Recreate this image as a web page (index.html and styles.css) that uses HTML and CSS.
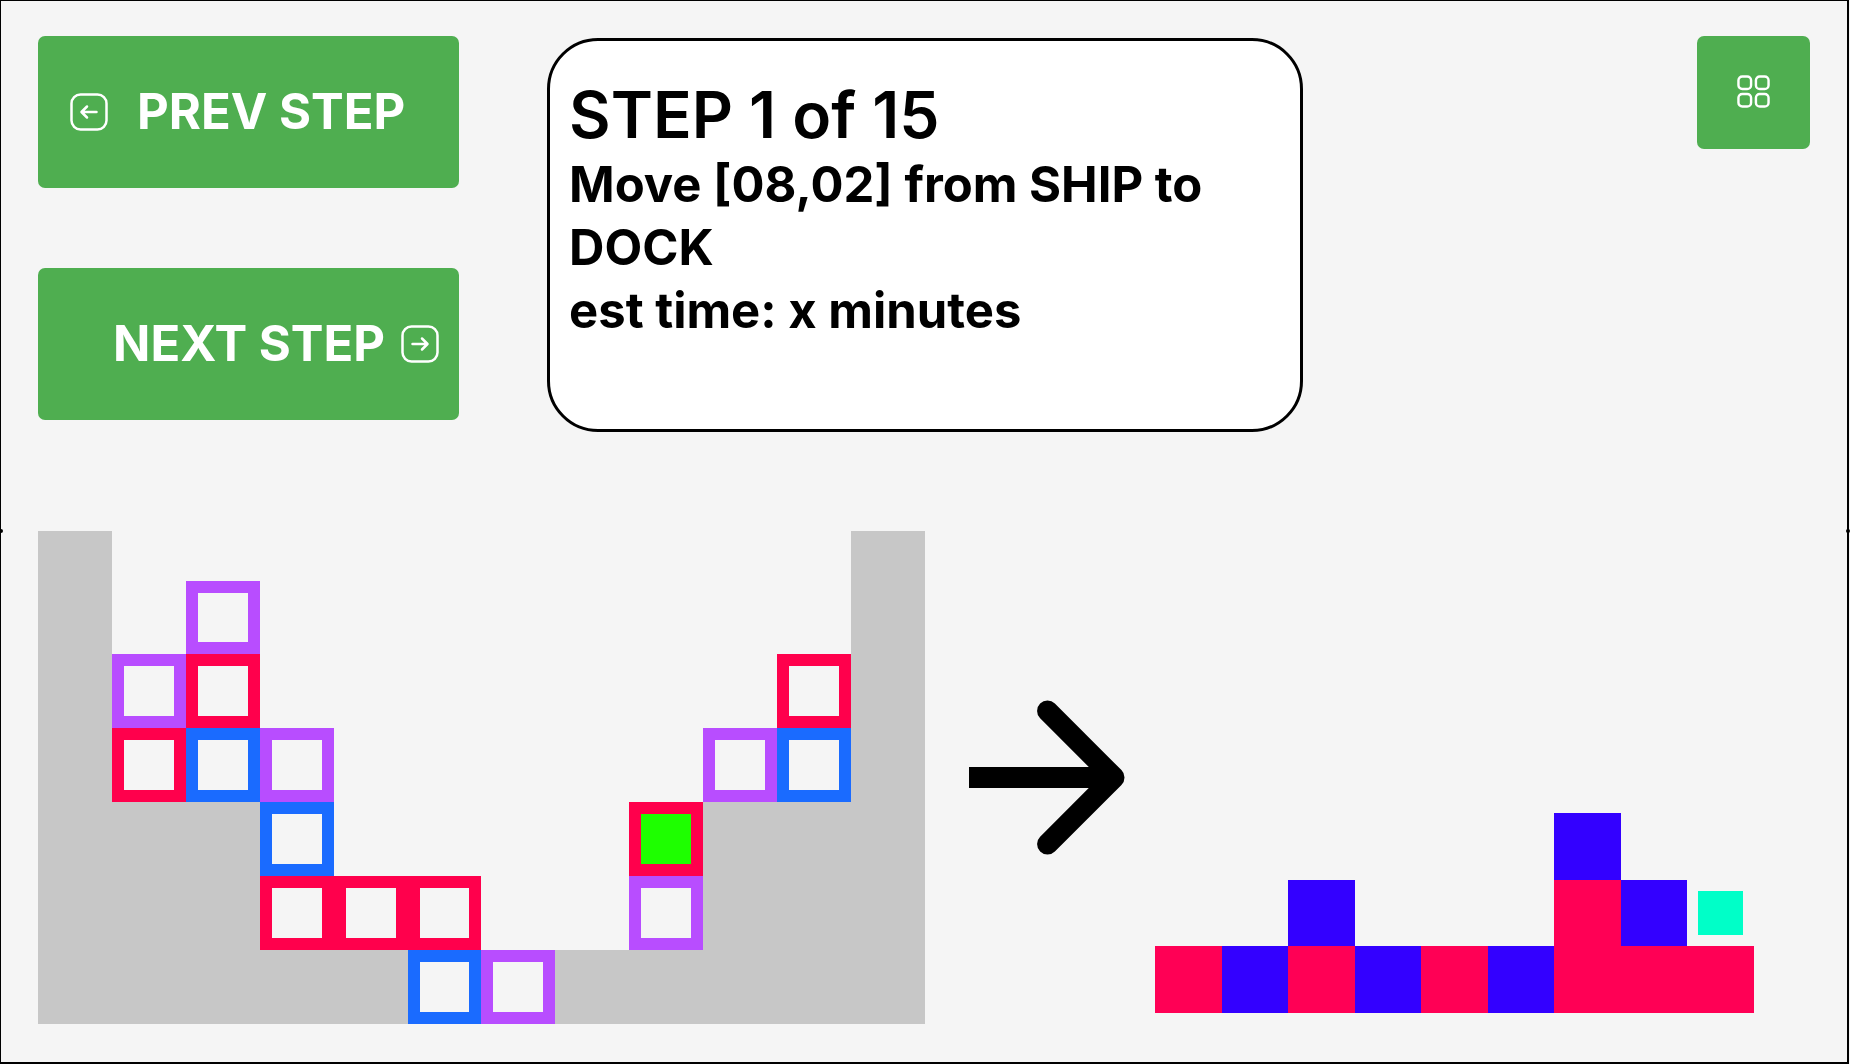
FILE: index.html
```html
<!DOCTYPE html>
<html lang="en">
<head>
<meta charset="utf-8">
<meta name="viewport" content="width=device-width, initial-scale=1">
<title>Step 1 of 15</title>
<link rel="stylesheet" href="styles.css">
</head>
<body>
<main class="page">
  <header class="top">
    <nav class="steps" aria-label="Steps">
      <button class="btn btn-prev" type="button">
        <svg class="btn-icon" viewBox="0 0 38 38" stroke-width="2.5" aria-hidden="true"><rect x="1.5" y="1.5" width="35" height="35" rx="9"/><path d="M26.5 19H12.5M17 13.5L11.5 19L17 24.5"/></svg>
        <span>PREV STEP</span>
      </button>
      <button class="btn btn-next" type="button">
        <span>NEXT STEP</span>
        <svg class="btn-icon" viewBox="0 0 38 38" stroke-width="2.5" aria-hidden="true"><rect x="1.5" y="1.5" width="35" height="35" rx="9"/><path d="M11.5 19H25.5M21 13.5L26.5 19L21 24.5"/></svg>
      </button>
    </nav>
    <section class="panel">
      <h1 class="panel-title">STEP 1 of 15</h1>
      <p class="panel-text">Move [08,02] from SHIP to DOCK</p>
      <p class="panel-text">est time: x minutes</p>
    </section>
    <button class="btn btn-menu" type="button" aria-label="Menu">
      <svg class="menu-icon" viewBox="0 0 34 34" stroke-width="2.5" aria-hidden="true"><rect x="1.5" y="1.5" width="13" height="13" rx="4"/><rect x="19.5" y="1.5" width="13" height="13" rx="4"/><rect x="1.5" y="19.5" width="13" height="13" rx="4"/><rect x="19.5" y="19.5" width="13" height="13" rx="4"/></svg>
    </button>
  </header>

  <section class="boards">
    <div class="ship" role="img" aria-label="Ship">
      <div class="hull hull-port"></div>
      <div class="hull hull-starboard"></div>
      <div class="hull hull-port-step"></div>
      <div class="hull hull-starboard-step"></div>
      <div class="hull hull-keel"></div>
      <div class="box purple" style="--col:3;--row:2"></div>
      <div class="box purple" style="--col:2;--row:3"></div>
      <div class="box red" style="--col:3;--row:3"></div>
      <div class="box red" style="--col:11;--row:3"></div>
      <div class="box red" style="--col:2;--row:4"></div>
      <div class="box blue" style="--col:3;--row:4"></div>
      <div class="box purple" style="--col:4;--row:4"></div>
      <div class="box purple" style="--col:10;--row:4"></div>
      <div class="box blue" style="--col:11;--row:4"></div>
      <div class="box blue" style="--col:4;--row:5"></div>
      <div class="box red selected" style="--col:9;--row:5"></div>
      <div class="box red" style="--col:4;--row:6"></div>
      <div class="box red" style="--col:5;--row:6"></div>
      <div class="box red" style="--col:6;--row:6"></div>
      <div class="box purple" style="--col:9;--row:6"></div>
      <div class="box blue" style="--col:6;--row:7"></div>
      <div class="box purple" style="--col:7;--row:7"></div>
    </div>

    <svg class="arrow" viewBox="0 0 158 156" stroke-width="21" aria-hidden="true"><path d="M0 78H146" stroke-linecap="butt"/><path d="M79 11L146 78L79 145"/></svg>

    <div class="dock" role="img" aria-label="Dock">
      <div class="crate indigo" style="--col:7;--row:1"></div>
      <div class="crate indigo" style="--col:3;--row:2"></div>
      <div class="crate rose" style="--col:7;--row:2"></div>
      <div class="crate indigo" style="--col:8;--row:2"></div>
      <div class="crate target" style="--col:9;--row:2"></div>
      <div class="crate rose" style="--col:1;--row:3"></div>
      <div class="crate indigo" style="--col:2;--row:3"></div>
      <div class="crate rose" style="--col:3;--row:3"></div>
      <div class="crate indigo" style="--col:4;--row:3"></div>
      <div class="crate rose" style="--col:5;--row:3"></div>
      <div class="crate indigo" style="--col:6;--row:3"></div>
      <div class="crate rose" style="--col:7;--row:3"></div>
      <div class="crate rose" style="--col:8;--row:3"></div>
      <div class="crate rose" style="--col:9;--row:3"></div>
    </div>
  </section>
</main>
</body>
</html>
```
FILE: styles.css
```css
* { box-sizing: border-box; }

body {
  margin: 0;
  background: #f5f5f5;
  color: #000;
  font-family: Inter, "Liberation Sans", sans-serif;
}

.page {
  position: relative;
  display: flex;
  flex-direction: column;
  justify-content: space-between;
  gap: 48px;
  min-height: 100vh;
  margin-right: 1px;
  padding: 35px 37px 38px;
  border: 1px solid #000;
  border-right-width: 2px;
  border-bottom-width: 2px;
}

/* small handles on the frame's side edges */
.page::before,
.page::after {
  content: "";
  position: absolute;
  top: 528px;
  width: 4px;
  height: 4px;
  border-radius: 2px;
  background: #000;
}
.page::before { left: -2px; }
.page::after { right: -3px; }

.top {
  display: flex;
  align-items: flex-start;
}

.steps {
  display: flex;
  flex-direction: column;
  gap: 80px;
  flex: 0 1 421px;
}

.btn {
  display: flex;
  align-items: center;
  border: 0;
  border-radius: 7px;
  background: #4fae50;
  color: #fff;
  font: 700 49px/60px Inter, "Liberation Sans", sans-serif;
  white-space: nowrap;
  cursor: pointer;
}

.btn-prev,
.btn-next {
  height: 152px;
}
.btn-prev {
  gap: 29px;
  padding: 0 32px;
}
.btn-next {
  justify-content: flex-end;
  gap: 16px;
  padding: 0 20px;
}

.btn-icon,
.menu-icon,
.arrow {
  flex: none;
  fill: none;
  stroke: #fff;
  stroke-linecap: round;
  stroke-linejoin: round;
}
.btn-icon { width: 38px; height: 38px; }
.menu-icon { width: 33px; height: 33px; }

.btn-menu {
  justify-content: center;
  width: 113px;
  height: 113px;
  margin-left: auto;
  padding: 0 0 2px;
}

.panel {
  flex: 0 1 756px;
  min-height: 394px;
  margin: 2px 0 0 88px;
  padding: 35px 19px;
  border: 3px solid #000;
  border-radius: 51px;
  background: #fff;
}

.panel-title {
  margin: 0;
  font-size: 64px;
  line-height: 77px;
  font-weight: 600;
}

.panel-text {
  margin: 0;
  font-size: 49px;
  line-height: 63px;
  font-weight: 700;
}

.boards {
  display: grid;
  grid-template-columns: 887fr 172fr 599fr;
  column-gap: 29px;
  align-items: end;
  padding-right: 56px;
}

.ship {
  display: grid;
  grid-template-columns: repeat(12, 1fr);
  grid-template-rows: 2fr repeat(6, 3fr);
  aspect-ratio: 9 / 5;
}

.hull { background: #c7c7c7; }
.hull-port { grid-area: 1 / 1 / 8 / 2; }
.hull-starboard { grid-area: 1 / 12 / 8 / 13; }
.hull-port-step { grid-area: 5 / 2 / 8 / 4; }
.hull-starboard-step { grid-area: 5 / 10 / 8 / 12; }
.hull-keel { grid-area: 7 / 4 / 8 / 10; }

.box,
.crate {
  grid-column: var(--col);
  grid-row: var(--row);
}

.box {
  border: 12px solid;
  background: #f5f5f5;
}
.purple { border-color: #b84dff; }
.red { border-color: #ff004c; }
.blue { border-color: #1a6bff; }
.selected { background: #1eff00; }

.arrow {
  width: 100%;
  padding-left: 15px;
  align-self: center;
  stroke: #000;
}

.dock {
  display: grid;
  grid-template-columns: repeat(9, 1fr);
  grid-template-rows: repeat(3, 1fr);
  aspect-ratio: 3 / 1;
  margin-bottom: 11px;
}
.rose { background: #ff0055; }
.indigo { background: #3300ff; }
.target {
  margin: 11px;
  background: #00ffc8;
}
```
